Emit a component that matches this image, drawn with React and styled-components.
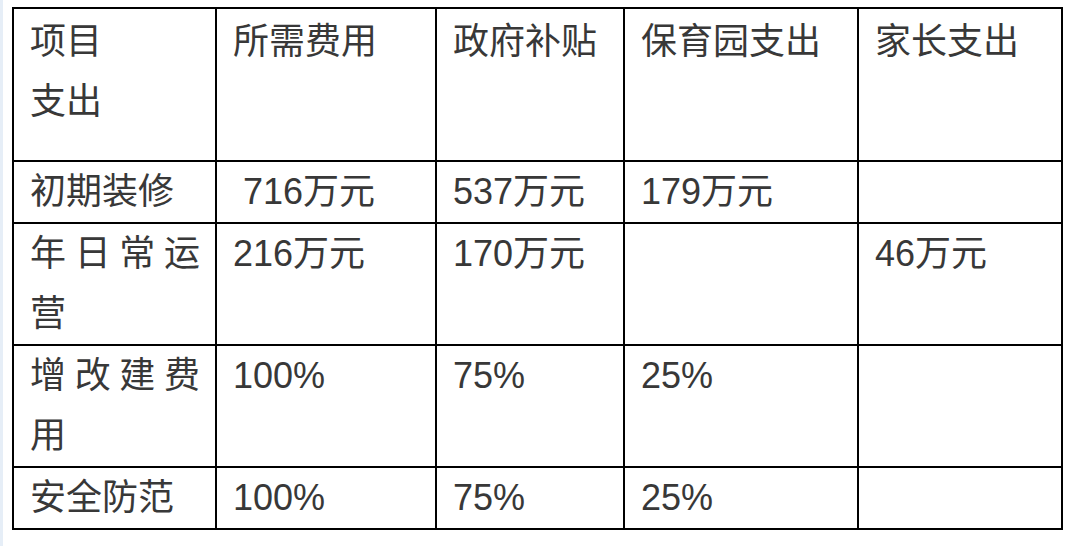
import React from 'react'
import styled, { createGlobalStyle } from 'styled-components'

const GlobalStyle = createGlobalStyle`
  html, body {
    margin: 0;
    padding: 0;
    background: #ffffff;
  }
  body {
    font-family: "Liberation Sans", "Noto Sans CJK SC", sans-serif;
  }
`

const Page = styled.div`
  height: 546px;
  border-left: 3px solid #e6eef7;
  padding: 7px 0 0 9px;
  box-sizing: border-box;
`

const Table = styled.table`
  border-collapse: collapse;
  table-layout: fixed;
  width: 1049px;
  color: #383838;
  font-size: 36px;
  line-height: 60px;
`

const HeadRow = styled.tr`
  height: 153px;
`

const Cell = styled.td`
  border: 2px solid #000000;
  padding: ${({ head }) => (head ? '3px' : '0')} 15px 0 16px;
  vertical-align: top;
  text-align: ${({ justify }) => (justify ? 'justify' : 'left')};
  text-justify: inter-character;
  white-space: pre-wrap;
  word-break: break-all;
`

const columns = [203, 220, 188, 234, 204]

const header = ['项目\n支出', '所需费用', '政府补贴', '保育园支出', '家长支出']

const rows = [
  ['初期装修', ' 716万元', '537万元', '179万元', ''],
  ['年日常运营', '216万元', '170万元', '', '46万元'],
  ['增改建费用', '100%', '75%', '25%', ''],
  ['安全防范', '100%', '75%', '25%', ''],
]

export default function App() {
  return (
    <>
      <GlobalStyle />
      <Page>
        <Table>
          <colgroup>
            {columns.map((w, i) => (
              <col key={i} style={{ width: w }} />
            ))}
          </colgroup>
          <tbody>
            <HeadRow>
              {header.map((h, i) => (
                <Cell key={i} head>{h}</Cell>
              ))}
            </HeadRow>
            {rows.map((r, i) => (
              <tr key={i}>
                {r.map((c, j) => (
                  <Cell key={j} justify={j === 0}>{c}</Cell>
                ))}
              </tr>
            ))}
          </tbody>
        </Table>
      </Page>
    </>
  )
}
